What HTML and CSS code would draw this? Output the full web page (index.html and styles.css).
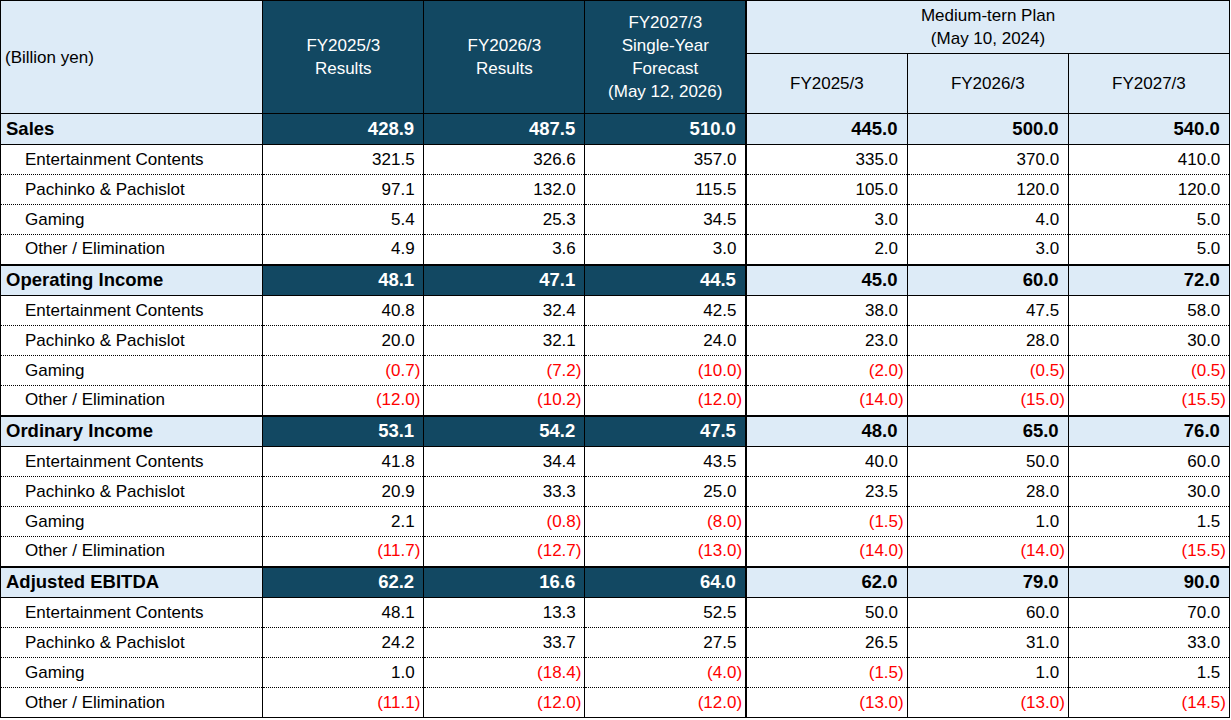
FILE: index.html
```html
<!DOCTYPE html>
<html lang="en">
<head>
<meta charset="utf-8">
<title>Financial Plan</title>
<link rel="stylesheet" href="styles.css">
</head>
<body>
<table class="fin">
  <colgroup>
    <col class="c-label">
    <col class="c-num"><col class="c-num"><col class="c-num">
    <col class="c-num"><col class="c-num"><col class="c-num">
  </colgroup>
  <thead>
    <tr class="h1">
      <th rowspan="2" class="unit">(Billion yen)</th>
      <th rowspan="2" class="dk">FY2025/3<br>Results</th>
      <th rowspan="2" class="dk">FY2026/3<br>Results</th>
      <th rowspan="2" class="dk sep">FY2027/3<br>Single-Year<br>Forecast<br>(May 12, 2026)</th>
      <th colspan="3" class="lt">Medium-tern Plan<br>(May 10, 2024)</th>
    </tr>
    <tr class="h2">
      <th class="lt">FY2025/3</th>
      <th class="lt">FY2026/3</th>
      <th class="lt">FY2027/3</th>
    </tr>
  </thead>
  <tbody>
    <tr class="main first">
      <td class="lab">Sales</td>
      <td class="dk"><span class="p">428.9</span></td><td class="dk"><span class="p">487.5</span></td><td class="dk sep"><span class="p">510.0</span></td>
      <td class="lt"><span class="p">445.0</span></td><td class="lt"><span class="p">500.0</span></td><td class="lt"><span class="p">540.0</span></td>
    </tr>
    <tr class="sub">
      <td class="lab">Entertainment Contents</td>
      <td><span class="p">321.5</span></td><td><span class="p">326.6</span></td><td class="sep"><span class="p">357.0</span></td>
      <td><span class="p">335.0</span></td><td><span class="p">370.0</span></td><td><span class="p">410.0</span></td>
    </tr>
    <tr class="sub">
      <td class="lab">Pachinko &amp; Pachislot</td>
      <td><span class="p">97.1</span></td><td><span class="p">132.0</span></td><td class="sep"><span class="p">115.5</span></td>
      <td><span class="p">105.0</span></td><td><span class="p">120.0</span></td><td><span class="p">120.0</span></td>
    </tr>
    <tr class="sub">
      <td class="lab">Gaming</td>
      <td><span class="p">5.4</span></td><td><span class="p">25.3</span></td><td class="sep"><span class="p">34.5</span></td>
      <td><span class="p">3.0</span></td><td><span class="p">4.0</span></td><td><span class="p">5.0</span></td>
    </tr>
    <tr class="sub last">
      <td class="lab">Other / Elimination</td>
      <td><span class="p">4.9</span></td><td><span class="p">3.6</span></td><td class="sep"><span class="p">3.0</span></td>
      <td><span class="p">2.0</span></td><td><span class="p">3.0</span></td><td><span class="p">5.0</span></td>
    </tr>

    <tr class="main">
      <td class="lab">Operating Income</td>
      <td class="dk"><span class="p">48.1</span></td><td class="dk"><span class="p">47.1</span></td><td class="dk sep"><span class="p">44.5</span></td>
      <td class="lt"><span class="p">45.0</span></td><td class="lt"><span class="p">60.0</span></td><td class="lt"><span class="p">72.0</span></td>
    </tr>
    <tr class="sub">
      <td class="lab">Entertainment Contents</td>
      <td><span class="p">40.8</span></td><td><span class="p">32.4</span></td><td class="sep"><span class="p">42.5</span></td>
      <td><span class="p">38.0</span></td><td><span class="p">47.5</span></td><td><span class="p">58.0</span></td>
    </tr>
    <tr class="sub">
      <td class="lab">Pachinko &amp; Pachislot</td>
      <td><span class="p">20.0</span></td><td><span class="p">32.1</span></td><td class="sep"><span class="p">24.0</span></td>
      <td><span class="p">23.0</span></td><td><span class="p">28.0</span></td><td><span class="p">30.0</span></td>
    </tr>
    <tr class="sub">
      <td class="lab">Gaming</td>
      <td class="neg">(0.7)</td><td class="neg">(7.2)</td><td class="neg sep">(10.0)</td>
      <td class="neg">(2.0)</td><td class="neg">(0.5)</td><td class="neg">(0.5)</td>
    </tr>
    <tr class="sub last">
      <td class="lab">Other / Elimination</td>
      <td class="neg">(12.0)</td><td class="neg">(10.2)</td><td class="neg sep">(12.0)</td>
      <td class="neg">(14.0)</td><td class="neg">(15.0)</td><td class="neg">(15.5)</td>
    </tr>

    <tr class="main">
      <td class="lab">Ordinary Income</td>
      <td class="dk"><span class="p">53.1</span></td><td class="dk"><span class="p">54.2</span></td><td class="dk sep"><span class="p">47.5</span></td>
      <td class="lt"><span class="p">48.0</span></td><td class="lt"><span class="p">65.0</span></td><td class="lt"><span class="p">76.0</span></td>
    </tr>
    <tr class="sub">
      <td class="lab">Entertainment Contents</td>
      <td><span class="p">41.8</span></td><td><span class="p">34.4</span></td><td class="sep"><span class="p">43.5</span></td>
      <td><span class="p">40.0</span></td><td><span class="p">50.0</span></td><td><span class="p">60.0</span></td>
    </tr>
    <tr class="sub">
      <td class="lab">Pachinko &amp; Pachislot</td>
      <td><span class="p">20.9</span></td><td><span class="p">33.3</span></td><td class="sep"><span class="p">25.0</span></td>
      <td><span class="p">23.5</span></td><td><span class="p">28.0</span></td><td><span class="p">30.0</span></td>
    </tr>
    <tr class="sub">
      <td class="lab">Gaming</td>
      <td><span class="p">2.1</span></td><td class="neg">(0.8)</td><td class="neg sep">(8.0)</td>
      <td class="neg">(1.5)</td><td><span class="p">1.0</span></td><td><span class="p">1.5</span></td>
    </tr>
    <tr class="sub last">
      <td class="lab">Other / Elimination</td>
      <td class="neg">(11.7)</td><td class="neg">(12.7)</td><td class="neg sep">(13.0)</td>
      <td class="neg">(14.0)</td><td class="neg">(14.0)</td><td class="neg">(15.5)</td>
    </tr>

    <tr class="main">
      <td class="lab">Adjusted EBITDA</td>
      <td class="dk"><span class="p">62.2</span></td><td class="dk"><span class="p">16.6</span></td><td class="dk sep"><span class="p">64.0</span></td>
      <td class="lt"><span class="p">62.0</span></td><td class="lt"><span class="p">79.0</span></td><td class="lt"><span class="p">90.0</span></td>
    </tr>
    <tr class="sub">
      <td class="lab">Entertainment Contents</td>
      <td><span class="p">48.1</span></td><td><span class="p">13.3</span></td><td class="sep"><span class="p">52.5</span></td>
      <td><span class="p">50.0</span></td><td><span class="p">60.0</span></td><td><span class="p">70.0</span></td>
    </tr>
    <tr class="sub">
      <td class="lab">Pachinko &amp; Pachislot</td>
      <td><span class="p">24.2</span></td><td><span class="p">33.7</span></td><td class="sep"><span class="p">27.5</span></td>
      <td><span class="p">26.5</span></td><td><span class="p">31.0</span></td><td><span class="p">33.0</span></td>
    </tr>
    <tr class="sub">
      <td class="lab">Gaming</td>
      <td><span class="p">1.0</span></td><td class="neg">(18.4)</td><td class="neg sep">(4.0)</td>
      <td class="neg">(1.5)</td><td><span class="p">1.0</span></td><td><span class="p">1.5</span></td>
    </tr>
    <tr class="sub last">
      <td class="lab">Other / Elimination</td>
      <td class="neg">(11.1)</td><td class="neg">(12.0)</td><td class="neg sep">(12.0)</td>
      <td class="neg">(13.0)</td><td class="neg">(13.0)</td><td class="neg">(14.5)</td>
    </tr>
  </tbody>
</table>
</body>
</html>
```
FILE: styles.css
```css
html, body {
  margin: 0;
  padding: 0;
  background: #ffffff;
}

body {
  font-family: "Liberation Sans", Arial, sans-serif;
  color: #000000;
}

.fin {
  border-collapse: collapse;
  table-layout: fixed;
  width: 1230px;
  border: 1px solid #000;
  font-size: 17px;
}

.c-label { width: 262px; }
.c-num { width: 161px; }

.fin th,
.fin td {
  padding: 0;
  border-left: 1px solid #000;
  border-right: 1px solid #000;
  white-space: nowrap;
  overflow: hidden;
}

/* header */
.fin th {
  font-weight: normal;
  line-height: 23px;
  text-align: center;
  vertical-align: middle;
  border-top: 1px solid #000;
  border-bottom: 1px solid #000;
}

.h1 { height: 53px; }
.h2 { height: 60px; }

.fin th.unit {
  text-align: left;
  padding-left: 4px;
  background: #ddebf7;
}

.dk {
  background: #124862;
  color: #ffffff;
}

.lt {
  background: #ddebf7;
}

.fin .sep {
  border-right: 2px solid #000;
}

/* body rows */
.fin td {
  text-align: right;
  padding-right: 3px;
  vertical-align: middle;
  line-height: 20px;
}

.fin td.lab {
  text-align: left;
  padding-right: 0;
}

.main {
  height: 31px;
}

.main td {
  font-weight: bold;
  font-size: 18.5px;
  border-top: 2px solid #000;
  border-bottom: 1px solid #000;
}

.main.first td {
  border-top: 1px solid #000;
}

.main td.lab {
  background: #ddebf7;
  padding-left: 5px;
}

.sub {
  height: 30px;
}

.sub td {
  border-bottom: 1px dotted #000;
}

.sub.last td {
  border-bottom: none;
}

.sub td.lab {
  padding-left: 24px;
}

.p::after {
  content: ")";
  visibility: hidden;
}

.neg {
  color: #ff0000;
}
```
